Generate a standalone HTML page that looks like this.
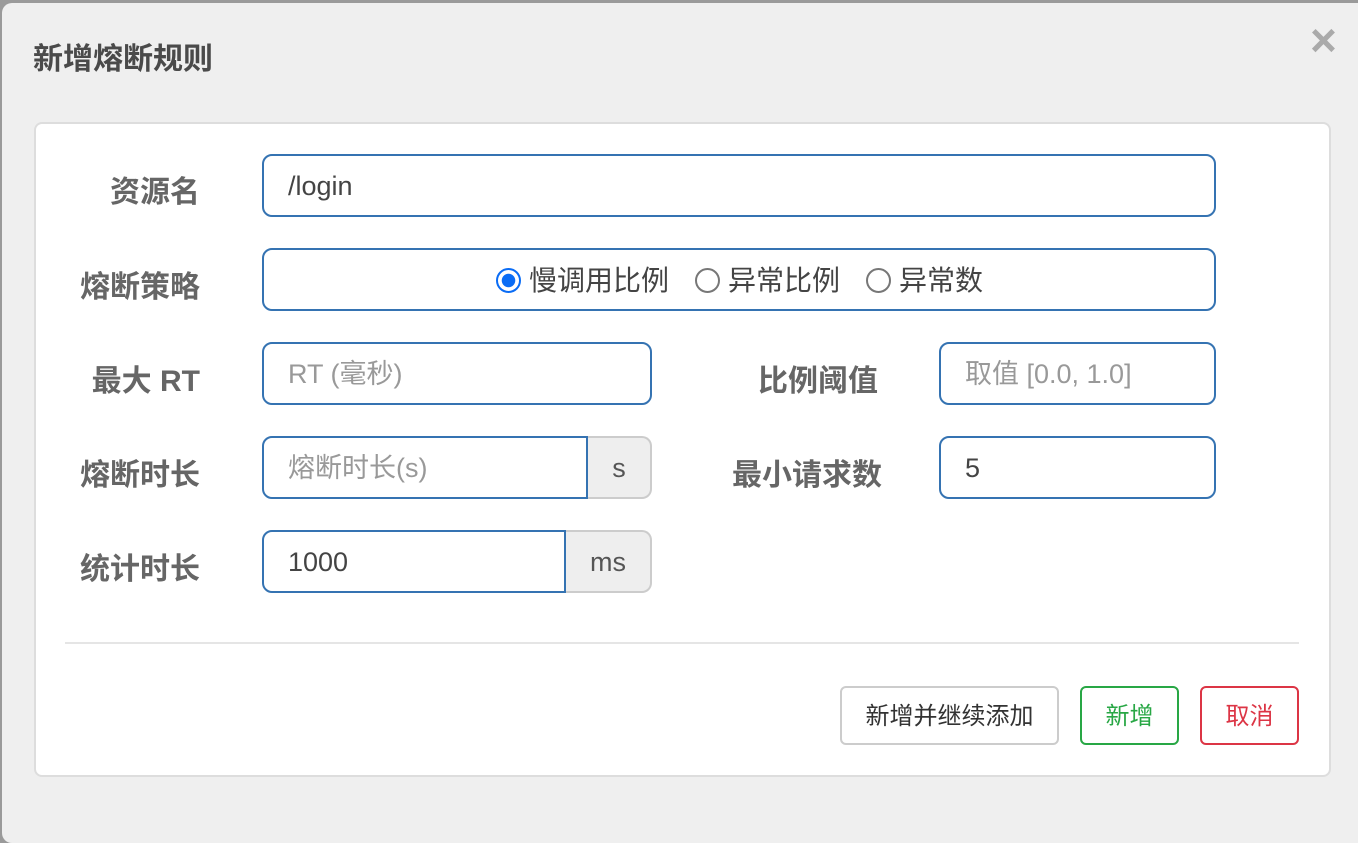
<!DOCTYPE html>
<html><head><meta charset="utf-8"><style>
*{box-sizing:border-box;margin:0;padding:0}
body{width:1358px;height:828px;background:#9a9a9a;font-family:"Liberation Sans","Noto Sans CJK SC",sans-serif;position:relative;overflow:hidden}
.modal{position:absolute;left:2px;top:3px;width:1370px;height:840px;background:#efefef;border-radius:10px}
.title{position:absolute;left:33px;top:40px;font-size:30px;font-weight:bold;color:#4a4a4a;line-height:40px}
.close{position:absolute;left:1310px;top:20px;font-size:46px;font-weight:bold;color:#aaa;line-height:40px}
.panel{position:absolute;left:34px;top:122px;width:1297px;height:655px;background:#fff;border:2px solid #ddd;border-radius:8px}
.lbl{position:absolute;font-size:30px;font-weight:bold;color:#666;text-align:right;line-height:40px}
.inp{position:absolute;height:63px;border:2px solid #3573b2;border-radius:10px;background:#fff;font-size:27px;color:#444;padding-left:24px;padding-top:2px;line-height:57px;white-space:nowrap}
.ph{color:#999}
.add{position:absolute;height:63px;background:#eee;border:2px solid #ccc;border-left:none;border-radius:0 10px 10px 0;font-size:27px;color:#555;text-align:center;padding-top:2px;line-height:57px}
.radio{display:inline-block;width:25px;height:25px;border-radius:50%;border:2px solid #777;vertical-align:-3px;margin-right:8px}
.radio.on{border:2px solid #0a6cf5;background:radial-gradient(circle,#0a6cf5 0 6.5px,#fff 7px)}
.btn{position:absolute;top:686px;height:59px;border:2px solid #ccc;border-radius:6px;font-size:24px;text-align:center;padding-top:2px;line-height:53px;color:#333;background:#fff}
hr{position:absolute;left:65px;top:642px;width:1234px;border:none;border-top:2px solid #e5e5e5}
</style></head><body>
<div class="modal"></div>
<div class="title">新增熔断规则</div>
<div class="close">×</div>
<div class="panel"></div>
<div class="lbl" style="left:40px;width:160px;top:173px">资源名</div>
<div class="inp" style="left:262px;top:154px;width:954px">/login</div>
<div class="lbl" style="left:40px;width:160px;top:268px">熔断策略</div>
<div class="inp" style="left:262px;top:248px;width:954px;padding-left:232px;font-size:28px"><span class="radio on"></span>慢调用比例<span style="display:inline-block;width:26px"></span><span class="radio"></span>异常比例<span style="display:inline-block;width:26px"></span><span class="radio"></span>异常数</div>
<div class="lbl" style="left:20px;width:180px;top:362px">最大 RT</div>
<div class="inp" style="left:262px;top:342px;width:390px"><span class="ph">RT (毫秒)</span></div>
<div class="lbl" style="left:680px;width:198px;top:362px">比例阈值</div>
<div class="inp" style="left:939px;top:342px;width:277px"><span class="ph">取值 [0.0, 1.0]</span></div>
<div class="lbl" style="left:40px;width:160px;top:456px">熔断时长</div>
<div class="inp" style="left:262px;top:436px;width:326px;border-radius:10px 0 0 10px"><span class="ph">熔断时长(s)</span></div>
<div class="add" style="left:588px;top:436px;width:64px">s</div>
<div class="lbl" style="left:680px;width:202px;top:456px">最小请求数</div>
<div class="inp" style="left:939px;top:436px;width:277px">5</div>
<div class="lbl" style="left:40px;width:160px;top:550px">统计时长</div>
<div class="inp" style="left:262px;top:530px;width:304px;border-radius:10px 0 0 10px">1000</div>
<div class="add" style="left:566px;top:530px;width:86px">ms</div>
<hr>
<div class="btn" style="left:840px;width:219px">新增并继续添加</div>
<div class="btn" style="left:1080px;width:99px;border-color:#28a745;color:#28a745">新增</div>
<div class="btn" style="left:1200px;width:99px;border-color:#dc3545;color:#dc3545">取消</div>
</body></html>
